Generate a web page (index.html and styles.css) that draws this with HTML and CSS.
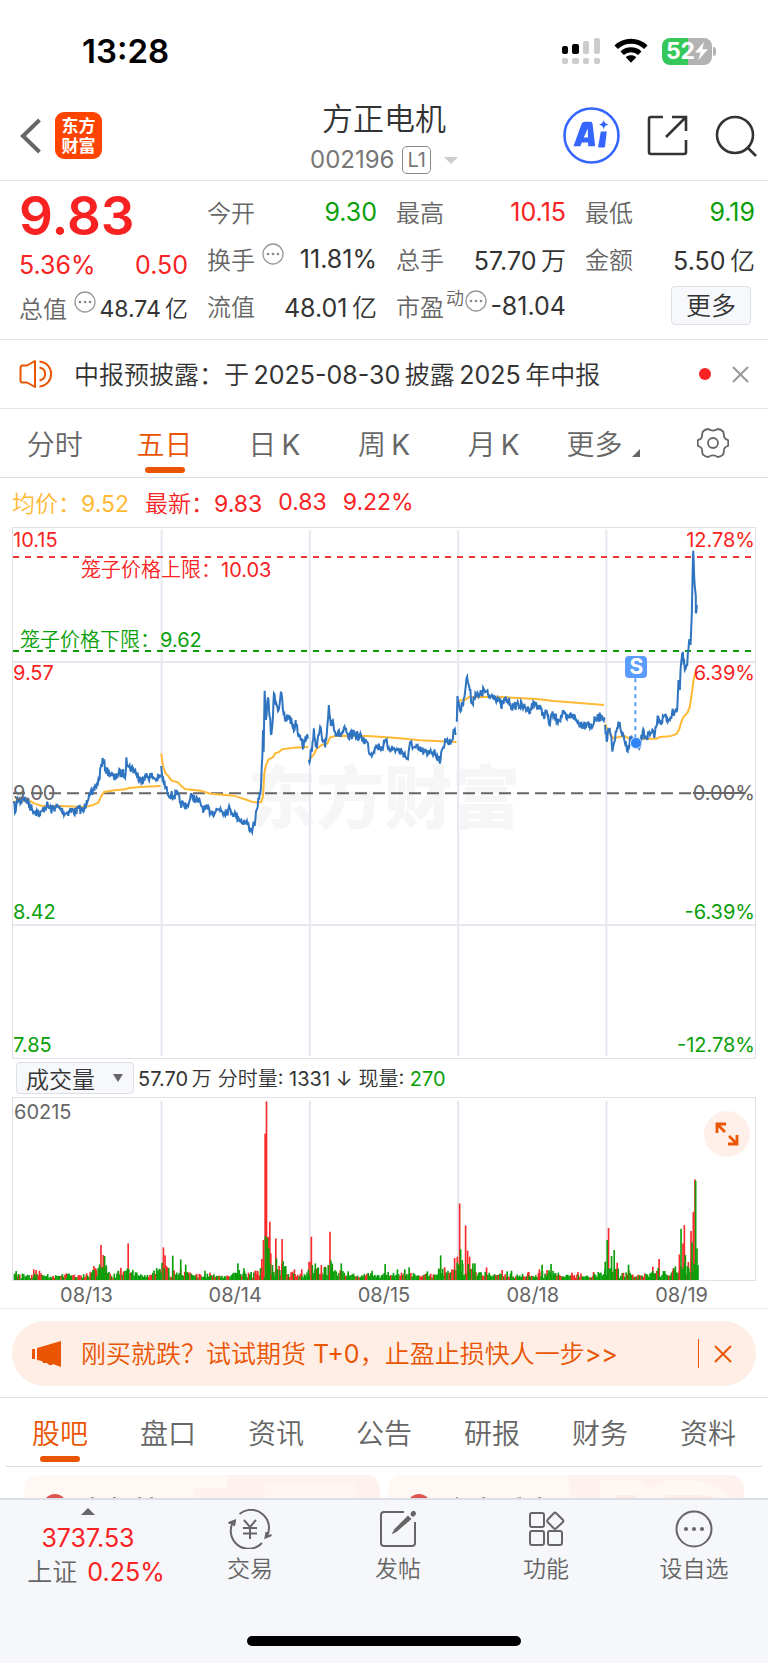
FILE: index.html
```html
<!DOCTYPE html>
<html lang="zh-CN">
<head>
    <meta charset="UTF-8">
    <meta name="viewport" content="width=device-width, initial-scale=1.0">
    <title>方正电机 002196</title>
    <link rel="stylesheet" href="styles.css">
</head>
<body>
    <div class="status-bar">
        <span class="time">13:28</span>
        <div class="status-icons">
            <svg width="38" height="27" viewBox="0 0 38 27">
                <g fill="#000"><rect x="0" y="8" width="6" height="8" rx="2"/><rect x="10" y="6" width="7" height="10" rx="2"/></g>
                <g fill="#ccc"><rect x="21" y="3" width="6" height="13" rx="2"/><rect x="32" y="0" width="6" height="16" rx="2"/><rect x="0" y="20" width="6" height="6" rx="2"/><rect x="10" y="20" width="7" height="6" rx="2"/><rect x="21" y="20" width="6" height="6" rx="2"/><rect x="32" y="20" width="6" height="6" rx="2"/></g>
            </svg>
            <svg width="34" height="26" viewBox="0 0 34 26" fill="none" stroke="#000" stroke-width="5">
                <path d="M2.2 9.2C10.5 1.2 23.5 1.2 31.8 9.2"/>
                <path d="M8.2 15.3C13 10.7 21 10.7 25.8 15.3"/>
                <path d="M11.8 19.2C14.5 16.7 19.5 16.7 22.2 19.2L17 24.8Z" fill="#000" stroke="none"/>
            </svg>
            <div class="battery">
                <span>52</span>
                <svg width="13" height="18" viewBox="0 0 13 18"><path d="M9 0L0 10.5H5.5L3.5 18L13 7.3H7.3Z" fill="#fff"/></svg>
            </div>
        </div>
    </div>

    <header class="header">
        <div class="header-left">
            <button class="icon-btn" aria-label="返回">
                <svg width="22" height="36" viewBox="0 0 22 36" fill="none" stroke="#666" stroke-width="4"><path d="M19.500 2L3 18L19.500 34"/></svg>
            </button>
            <a class="logo" href="#">东方<br>财富</a>
        </div>
        <div class="title">
            <h1>方正电机</h1>
            <div class="code">002196 <span class="level">L1</span><i class="caret"></i></div>
        </div>
        <div class="header-right">
            <button class="icon-btn" aria-label="AI">
                <svg width="57" height="57" viewBox="0 0 57 57">
                    <circle cx="28.500" cy="28.500" r="27" fill="none" stroke="#3567ff" stroke-width="2.600"/>
                    <path fill="#3567ff" fill-rule="evenodd" d="M18.500 17Q19.500 14.800 22 14.800H27.500Q29.200 14.800 29.600 17L32.200 39.300H25.300L25 35.600H18.800L17.400 39.300H10.500ZM24.700 21.500L20.800 30.500H25Z"/>
                    <path fill="#3567ff" d="M37.800 24.500H43.800L42 39.800Q41.800 40.500 41 40.500H36Q35 40.500 35.200 39.500ZM40.700 13Q41.500 16.800 45.500 17.600Q41.500 18.500 40.700 22.200Q39.800 18.500 36 17.600Q39.800 16.800 40.700 13Z"/>
                </svg>
            </button>
            <button class="icon-btn" aria-label="分享">
                <svg width="41" height="41" viewBox="0 0 41 41" fill="none" stroke="#333" stroke-width="2.600">
                    <path d="M16 2H4Q2 2 2 4V37Q2 39 4 39H37Q39 39 39 37V25"/>
                    <path d="M25 2H39V16M38.500 2.500L19 22"/>
                </svg>
            </button>
            <button class="icon-btn" aria-label="搜索">
                <svg width="42" height="42" viewBox="0 0 42 42" fill="none" stroke="#333" stroke-width="2.600"><circle cx="20" cy="20" r="18"/><path d="M32.500 32.500L41 41"/></svg>
            </button>
        </div>
    </header>

    <section class="quote">
        <div class="quote-main">
            <div class="price">9.83</div>
            <div class="row red"><span>5.36%</span><span>0.50</span></div>
            <div class="row"><span class="label">总值<svg class="more-dot" viewBox="0 0 22 22"><use href="#dots"/></svg></span><span class="small">48.74&thinsp;亿</span></div>
        </div>
        <div class="quote-grid">
            <div class="row"><span class="label">今开</span><span class="green">9.30</span></div>
            <div class="row"><span class="label">最高</span><span class="red">10.15</span></div>
            <div class="row"><span class="label">最低</span><span class="green">9.19</span></div>
            <div class="row"><span class="label">换手<svg class="more-dot" viewBox="0 0 22 22"><use href="#dots"/></svg></span><span>11.81%</span></div>
            <div class="row"><span class="label">总手</span><span>57.70&thinsp;万</span></div>
            <div class="row"><span class="label">金额</span><span>5.50&thinsp;亿</span></div>
            <div class="row"><span class="label">流值</span><span>48.01&thinsp;亿</span></div>
            <div class="row pe"><span class="label">市盈<sup>动</sup><svg class="more-dot" viewBox="0 0 22 22"><use href="#dots"/></svg></span><span>-81.04</span></div>
            <div class="row end"><button class="more-btn">更多</button></div>
        </div>
    </section>

    <section class="notice">
        <svg width="34" height="30" viewBox="0 0 34 30" fill="none" stroke="#ea5504" stroke-width="2">
            <path d="M16 2V28L8 23.500H3.500Q1.500 23.500 1.500 21V9Q1.500 6.500 3.500 6.500H8Z" stroke-linejoin="round"/>
            <path d="M20.500 2.500C36 4 36 26 20.500 27.500M20.500 8.500C28 10 28 20 20.500 21.500"/>
        </svg>
        <a href="#">中报预披露：于&thinsp;2025-08-30&thinsp;披露&thinsp;2025&thinsp;年中报</a>
        <i class="dot"></i>
        <button class="icon-btn" aria-label="关闭"><svg width="17" height="17" viewBox="0 0 17 17" stroke="#999" stroke-width="2"><path d="M1 1L16 16M16 1L1 16"/></svg></button>
    </section>

    <nav class="period-tabs">
        <button>分时</button>
        <button class="active">五日</button>
        <button>日&thinsp;K</button>
        <button>周&thinsp;K</button>
        <button>月&thinsp;K</button>
        <button>更多<i class="corner"></i></button>
        <button aria-label="设置">
            <svg width="32" height="32" viewBox="0 0 32 32" fill="none" stroke="#666" stroke-width="1.800" stroke-linejoin="round">
                <circle cx="16" cy="16" r="5"/>
                <path d="M31 13Q31.600 16 31 19Q27.500 20 27 22.400Q27 25 26.200 27.400Q24 29.800 20.700 30Q18.500 28.400 16 28.400Q13.500 28.400 11.300 30Q8 29.800 5.800 27.400Q5 25 5 22.400Q4.500 20 1 19Q.4 16 1 13Q4.500 12 5 9.600Q5 7 5.800 4.600Q8 2.200 11.300 2Q13.500 3.600 16 3.600Q18.500 3.600 20.700 2Q24 2.200 26.200 4.600Q27 7 27 9.600Q27.500 12 31 13Z"/>
            </svg>
        </button>
    </nav>

    <main>
        <div class="legend">
            <span class="yellow">均价：9.52</span>
            <span class="red">最新：9.83</span>
            <span class="red">0.83</span>
            <span class="red">9.22%</span>
        </div>

        <div class="chart">
            <span class="watermark">东方财富</span>
            <svg class="plot" viewBox="36 -396 2232 1590" preserveAspectRatio="none">
                <g class="grid">
                    <path d="M483 -390V1188M929 -390V1188M1375 -390V1188M1821 -390V1188M36 6H2268M36 795H2268"/>
                </g>
                <path class="limit-up" d="M36 -309H2258"/>
                <path class="limit-down" d="M36 -27H2258"/>
                <path class="zero" d="M36 400H2080"/>
                <g id="avgLines" class="avg"></g>
                <g id="priceLines" class="price-line"></g>
                <path class="sell-line" d="M1908 55V245"/>
            </svg>
            <i class="sell-dot"></i>
            <span class="sell-badge">S</span>
            <span class="axis red t1">10.15</span>
            <span class="axis red t2">9.57</span>
            <span class="axis gray t3">9.00</span>
            <span class="axis green t4">8.42</span>
            <span class="axis green t5">7.85</span>
            <span class="axis right red t1">12.78%</span>
            <span class="axis right red t2">6.39%</span>
            <span class="axis right gray t3 struck">0.00%</span>
            <span class="axis right green t4">-6.39%</span>
            <span class="axis right green t5">-12.78%</span>
            <span class="limit-label red up">笼子价格上限：10.03</span>
            <span class="limit-label green down">笼子价格下限：9.62</span>
        </div>

        <div class="volume-bar">
            <button class="select-btn">成交量<i class="caret"></i></button>
            <span>57.70&thinsp;万</span>
            <span>分时量: 1331 ↓</span>
            <span>现量: <b class="green">270</b></span>
        </div>

        <div class="volume">
            <svg class="plot" viewBox="36 171 2232 547" preserveAspectRatio="none">
                <g class="grid">
                    <path d="M483 180V718M929 180V718M1375 180V718M1821 180V718"/>
                </g>
                <g id="volumeBars"></g>
            </svg>
            <span class="axis gray">60215</span>
            <button class="expand" aria-label="全屏">
                <svg width="24" height="24" viewBox="0 0 24 24" fill="none" stroke="#ea5504" stroke-width="2.800"><path d="M2 11V2H11M2 2L10 10M13 22H22V13M22 22L14 14"/></svg>
            </button>
        </div>
        <div class="dates"><span>08/13</span><span>08/14</span><span>08/15</span><span>08/18</span><span>08/19</span></div>

        <div class="promo-wrap">
            <div class="promo">
                <svg width="32" height="26" viewBox="0 0 32 26" fill="#ea5504"><path d="M1 8H4V18H1ZM6 7L30 0V26L22 23Q19 26 16 22L12 22L11 20L6 19Z"/></svg>
                <a href="#">刚买就跌？试试期货 T+0，止盈止损快人一步&gt;&gt;</a>
                <i class="line"></i>
                <button class="icon-btn" aria-label="关闭"><svg width="18" height="18" viewBox="0 0 18 18" stroke="#ea5504" stroke-width="2"><path d="M1 1L17 17M17 1L1 17"/></svg></button>
            </div>
        </div>

        <nav class="info-tabs">
            <button class="active">股吧</button>
            <button>盘口</button>
            <button>资讯</button>
            <button>公告</button>
            <button>研报</button>
            <button>财务</button>
            <button>资料</button>
        </nav>

        <div class="cards">
            <a class="card" href="#" aria-label="股吧热帖">
                <svg viewBox="0 0 356 80" preserveAspectRatio="xMinYMin slice">
                    <path fill="#fff1ee" d="M203 0H356V80H170V13H203Z"/>
                    <path fill="#fff6f3" d="M241 8H331V80H241Z"/>
                    <circle cx="31" cy="31" r="12" fill="#dd554e"/>
                    <path fill="#999" d="M67 22H70V30H67ZM89 22H92V30H89ZM114 22H117V30H114ZM126 22H129V30H126Z"/>
                </svg>
            </a>
            <a class="card" href="#" aria-label="股吧话题">
                <svg viewBox="0 0 356 80" preserveAspectRatio="xMinYMin slice">
                    <path fill="#fff1ee" d="M181 0H356V80H185Z"/>
                    <path fill="#fff7f4" d="M212 5H250L260 14L276 6Q322 0 344 24V80H216Z"/>
                    <path fill="#feece8" d="M228 20H248V80H228ZM277 20H310Q326 20 336 26V80H277Z"/>
                    <circle cx="31" cy="31" r="12" fill="#dd554e"/>
                    <path fill="#999" d="M68 22H70V30H68ZM94 22H97V30H94ZM127 23L133 22V30H127ZM150 22H153V30H150Z"/>
                </svg>
            </a>
        </div>
    </main>

    <footer class="bottom-bar">
        <a class="index" href="#">
            <i class="caret-up"></i>
            <span class="red">3737.53</span>
            <span>上证 <b class="red">0.25%</b></span>
        </a>
        <a href="#">
            <svg width="44" height="40" viewBox="0 0 44 40" fill="none" stroke="#666" stroke-width="2">
                <path d="M11.500 5A18 18 0 0 1 38.500 28M34 34A18 18 0 0 1 6 11.500M0.500 14L7 11.500L6 17M43.500 26L37.500 28.500L38.500 23"/>
                <path d="M16 11L22 18L28 11M22 18V30M15 19H29M15 24.500H29"/>
            </svg>
            交易
        </a>
        <a href="#">
            <svg width="40" height="40" viewBox="0 0 40 40" fill="none" stroke="#666" stroke-width="2">
                <path d="M26 3H6Q3 3 3 6V34Q3 37 6 37H34Q37 37 37 34V13"/>
                <path d="M35 5L35.500 4.500" stroke-width="5" stroke-linecap="round"/>
                <path fill="#666" stroke="none" d="M30 6.500L33.500 10L19 22.500L13.500 25.500L16.500 20Z"/>
            </svg>
            发帖
        </a>
        <a href="#">
            <svg width="40" height="40" viewBox="0 0 40 40" fill="none" stroke="#666" stroke-width="2">
                <rect x="4" y="4" width="14" height="14" rx="2"/><rect x="4" y="22" width="14" height="14" rx="2"/><rect x="22" y="22" width="14" height="14" rx="2"/>
                <path d="M27.800 4.200Q29 3 30.200 4.200L36.800 10.800Q38 12 36.800 13.200L30.200 19.200Q29 20.400 27.800 19.200L21.700 13.200Q20.500 12 21.700 10.800Z"/>
            </svg>
            功能
        </a>
        <a href="#">
            <svg width="40" height="40" viewBox="0 0 40 40" fill="none" stroke="#666" stroke-width="2">
                <circle cx="20" cy="20" r="17.500"/>
                <g fill="#666" stroke="none"><circle cx="12" cy="20" r="2"/><circle cx="20" cy="20" r="2"/><circle cx="28" cy="20" r="2"/></g>
            </svg>
            设自选
        </a>
        <i class="home"></i>
    </footer>

    <svg class="defs" width="0" height="0">
        <symbol id="dots" viewBox="0 0 22 22">
            <circle cx="11" cy="11" r="10" fill="none" stroke="#999" stroke-width="1.300"/>
            <g fill="#888"><circle cx="6" cy="11" r="1.300"/><circle cx="11" cy="11" r="1.300"/><circle cx="16" cy="11" r="1.300"/></g>
        </symbol>
    </svg>
    <script src="script.js"></script>
</body>
</html>
```
FILE: styles.css
```css
* {
    box-sizing: border-box;
}
body {
    margin: 0;
    height: 100vh;
    display: flex;
    flex-direction: column;
    overflow: hidden;
    background: #fff;
    color: #333;
    font-family: Inter, "Noto Sans CJK SC DemiLight", "Noto Sans CJK SC", sans-serif;
    font-size: 25px;
    font-weight: 400;
}
button {
    font: inherit;
    color: inherit;
    background: none;
    border: none;
    padding: 0;
    cursor: pointer;
}
a {
    color: inherit;
    text-decoration: none;
}
svg {
    display: block;
}
b {
    font-weight: inherit;
}
.red { color: #f82222; }
.green { color: #0a9f0a; }
.yellow { color: #ffb935; }
.gray { color: #666; }
.defs {
    position: absolute;
}
.status-bar {
    flex: none;
    height: 93px;
    padding: 9px 56px 0 82px;
    display: flex;
    align-items: center;
    justify-content: space-between;
}
.time {
    color: #000;
    font-size: 33px;
    font-weight: 600;
}
.status-icons {
    display: flex;
    align-items: center;
    gap: 14px;
}
.battery {
    width: 50px;
    height: 27px;
    border-radius: 8px;
    background: linear-gradient(90deg, #34c759 52%, #b3b3b3 52%);
    color: #fff;
    font-size: 23px;
    font-weight: 700;
    display: flex;
    align-items: center;
    justify-content: center;
}
.battery::after {
    content: "";
    width: 3px;
    height: 9px;
    margin-right: -8px;
    margin-left: 5px;
    border-radius: 0 3px 3px 0;
    background: #b3b3b3;
}
.header {
    flex: none;
    height: 88px;
    padding: 0 11px;
    display: grid;
    grid-template-columns: 1fr auto 1fr;
    align-items: center;
    border-bottom: 1px solid #e3e3e3;
}
.header-left, .header-right {
    padding-bottom: 2px;
    display: flex;
    align-items: center;
}
.header-left {
    padding-left: 9px;
    gap: 13px;
}
.header-right {
    justify-content: flex-end;
    gap: 27px;
}
.logo {
    width: 47px;
    height: 47px;
    padding-top: 3px;
    border-radius: 9px;
    background: #ff4400;
    color: #fff;
    font-family: "Noto Sans CJK SC", sans-serif;
    font-size: 17px;
    font-weight: 700;
    line-height: 20px;
    text-align: center;
}
.title {
    padding-top: 1px;
    text-align: center;
}
.title h1 {
    margin: 0;
    font-size: 31px;
    font-weight: 400;
    line-height: 46px;
}
.code {
    display: flex;
    align-items: center;
    color: #777;
    font-size: 24px;
    line-height: 36px;
}
.level {
    height: 28px;
    margin-left: 8px;
    padding: 0 4px;
    border: 1px solid #888;
    border-radius: 5px;
    font-size: 20px;
    line-height: 27px;
}
.caret {
    border: 7px solid transparent;
    border-top-color: #ccc;
    border-bottom: none;
}
.code .caret {
    margin-left: 13px;
}
.quote {
    flex: none;
    height: 159px;
    padding: 7px 13px 0 19px;
    display: grid;
    grid-template-columns: 169px 1fr;
    gap: 19px;
    border-bottom: 1px solid #e3e3e3;
}
.price {
    height: 56px;
    color: #f82222;
    font-size: 53px;
    font-weight: 600;
    line-height: 56px;
}
.quote-grid {
    display: grid;
    grid-template-columns: repeat(3, 1fr);
    grid-auto-rows: 47px;
    column-gap: 19px;
}
.row {
    height: 47px;
    display: flex;
    align-items: center;
    justify-content: space-between;
    white-space: nowrap;
}
.quote-main .row {
    height: 42px;
}
.label {
    color: #666;
    font-size: 24px;
    display: flex;
    align-items: center;
}
.small {
    font-size: 23px;
}
.more-dot {
    width: 22px;
    height: 22px;
    margin: 0 0 10px 7px;
}
.pe .more-dot {
    margin-left: 1px;
}
.pe sup {
    font-size: 18px;
    line-height: 18px;
    margin: 0 0 14px 2px;
}
.end {
    justify-content: flex-end;
}
.more-btn {
    width: 80px;
    height: 39px;
    margin-right: 4px;
    border: 1px solid #dcdfe6;
    border-radius: 4px;
    background: #f6f8fb;
    line-height: 36px;
}
.notice {
    flex: none;
    height: 69px;
    padding: 0 19px;
    display: flex;
    align-items: center;
    border-bottom: 1px solid #e6e6e8;
}
.notice a {
    flex: 1;
    padding: 0 0 3px 21px;
}
.dot {
    width: 12px;
    height: 12px;
    margin-right: 21px;
    border-radius: 50%;
    background: #f82222;
}
.period-tabs, .info-tabs {
    flex: none;
    height: 69px;
    display: flex;
    align-items: center;
    border-bottom: 1px solid #dcdde2;
    color: #666;
    font-size: 28px;
}
.period-tabs button, .info-tabs button {
    flex: 1;
    height: 100%;
    position: relative;
    display: flex;
    align-items: center;
    justify-content: center;
}
.period-tabs .active, .info-tabs .active {
    color: #ea5504;
}
.active::after {
    content: "";
    position: absolute;
    bottom: 4px;
    left: 50%;
    margin-left: -20px;
    width: 40px;
    height: 6px;
    border-radius: 3px;
    background: #ea5504;
}
.corner {
    margin: 20px 0 0 10px;
    border-left: 8px solid transparent;
    border-bottom: 8px solid #666;
}
main {
    flex: 1;
    min-height: 0;
    overflow: hidden;
}
.legend {
    height: 49px;
    padding: 0 12px 1px;
    display: flex;
    align-items: center;
    gap: 16px;
    font-size: 23px;
}
.chart, .volume {
    position: relative;
    margin: 0 12px;
    border: 1px solid #dfe1e8;
}
.chart {
    height: 532px;
}
.volume {
    height: 184px;
}
.plot {
    position: relative;
    width: 100%;
    height: 100%;
}
.plot path {
    fill: none;
    vector-effect: non-scaling-stroke;
}
.grid path {
    stroke: #e6e8f0;
    stroke-width: 2;
}
.limit-up, .limit-down {
    stroke: #ee3a3a;
    stroke-width: 2;
    stroke-dasharray: 6 6;
}
.limit-down {
    stroke: #0a9f0a;
}
.zero {
    stroke: #666;
    stroke-width: 2;
    stroke-dasharray: 12 6;
}
.avg path {
    stroke: #ffb935;
    stroke-width: 2;
}
.price-line path {
    stroke: #2f74c0;
    stroke-width: 2;
}
.sell-line {
    stroke: #5a9cf8;
    stroke-width: 2;
    stroke-dasharray: 4 4;
}
.watermark {
    position: absolute;
    top: 216px;
    left: 0;
    right: 0;
    text-align: center;
    color: #f6f6f6;
    font-family: "Noto Sans CJK SC", sans-serif;
    font-size: 68px;
    font-weight: 900;
    line-height: 100px;
}
.sell-dot, .sell-badge {
    position: absolute;
    left: 84%;
    transform: translateX(-50%);
}
.sell-dot {
    top: 210px;
    width: 10px;
    height: 10px;
    border-radius: 50%;
    background: #2d84f8;
    box-shadow: 0 0 0 1px #bcd9ff;
}
.sell-badge {
    top: 128px;
    width: 22px;
    height: 22px;
    border-radius: 4px;
    background: #5a9cff;
    color: #fff;
    font-size: 21px;
    font-weight: 700;
    line-height: 22px;
    text-align: center;
}
.axis {
    position: absolute;
    left: 0;
    font-size: 20px;
    line-height: 24px;
}
.right {
    left: auto;
    right: 0;
}
.t1 { top: 0; }
.t2 { top: 133px; }
.t3 { top: 253px; }
.t4 { top: 372px; }
.t5 { top: 505px; }
.struck {
    background: linear-gradient(#666, #666) 0 11px / 85% 2px no-repeat;
}
.limit-label {
    position: absolute;
    font-size: 20px;
    line-height: 28px;
}
.up {
    top: 28px;
    left: 68px;
}
.down {
    top: 98px;
    left: 7px;
}
.volume-bar {
    height: 38px;
    padding: 0 16px 1px;
    display: flex;
    align-items: center;
    gap: 6px;
    font-size: 20px;
}
.select-btn {
    width: 118px;
    height: 32px;
    padding: 0 10px 0 9px;
    margin-right: -2px;
    display: flex;
    align-items: center;
    justify-content: space-between;
    border: 1px solid #dcdfe6;
    border-radius: 4px;
    background: #f6f8fb;
    font-size: 23px;
}
.select-btn .caret {
    border-width: 8px 5px 0;
    border-top-color: #666;
}
.volume .axis {
    top: 2px;
    left: 1px;
}
.expand {
    position: absolute;
    top: 13px;
    right: 5px;
    width: 46px;
    height: 46px;
    border-radius: 50%;
    background: #fef0e9;
    display: flex;
    align-items: center;
    justify-content: center;
}
.dates {
    height: 28px;
    padding: 0 12px;
    display: flex;
    border-bottom: 1px solid #ececec;
    color: #666;
    font-size: 20px;
    line-height: 29px;
}
.dates span {
    flex: 1;
    text-align: center;
}
.promo-wrap {
    padding: 12px 12px 11px;
    border-bottom: 1px solid #e3e3e3;
}
.promo {
    height: 65px;
    padding: 0 24px 0 19px;
    display: flex;
    align-items: center;
    border-radius: 33px;
    background: #feeee5;
    color: #ea5504;
}
.promo a {
    flex: 1;
    padding: 0 0 3px 18px;
}
.line {
    width: 1px;
    height: 29px;
    margin-right: 15px;
    background: #ea5504;
}
.info-tabs {
    margin: 0 6px;
}
.cards {
    padding: 8px 24px 0;
    display: grid;
    grid-template-columns: 1fr 1fr;
    gap: 8px;
}
.card {
    height: 80px;
    border-radius: 14px;
    overflow: hidden;
    background: #fff8f5;
}
.card svg {
    width: 100%;
    height: 80px;
}
.bottom-bar {
    flex: none;
    position: relative;
    height: 165px;
    padding-top: 9px;
    display: flex;
    align-items: flex-start;
    border-top: 2px solid #dcdfe6;
    background: #f6f7fa;
    color: #666;
    font-size: 23px;
}
.bottom-bar a {
    flex: 1;
    display: flex;
    flex-direction: column;
    align-items: center;
    line-height: 40px;
}
.bottom-bar .index {
    flex: 0 0 176px;
    font-size: 25px;
    line-height: 34px;
}
.caret-up {
    margin: -1px 0 6px;
    border: 7px solid transparent;
    border-bottom-color: #666;
    border-top: none;
}
.index span:last-child {
    padding-left: 16px;
}
.index b {
    padding-left: 3px;
}
.home {
    position: absolute;
    left: 50%;
    bottom: 17px;
    width: 274px;
    height: 10px;
    margin-left: -137px;
    border-radius: 5px;
    background: #000;
}
```
FILE: script.js
```js
// each day: x offset of its points, then [x, y] pairs in plot units
const priceDays = [
    [0, [38,430, 44,455, 50,415, 60,425, 65,410, 80,425, 95,450, 110,455, 117,468, 125,450, 137,435, 150,450, 165,440, 180,448, 195,460, 210,450, 225,455, 235,445, 248,455, 258,420, 265,400, 275,405, 285,378, 295,360, 300,320, 307,300, 318,335, 330,340, 342,358, 350,340, 375,340, 377,292, 383,320, 400,330, 412,345, 415,365, 430,350, 455,348, 465,358, 480,352]],
    [0, [482,318, 484,345, 490,370, 500,395, 515,408, 530,405, 540,430, 550,437, 565,430, 575,405, 585,420, 600,430, 610,448, 640,455, 660,445, 670,455, 690,448, 700,460, 715,475, 730,485, 745,495, 750,510, 757,505, 765,480, 772,440, 778,400, 782,380, 786,290, 788,210, 790,275, 793,92, 797,180, 803,112, 808,170, 813,225, 818,170, 821,100, 828,130, 835,150, 842,95, 848,150, 856,185, 865,165, 875,190, 883,210, 886,180, 892,215, 905,235, 908,265, 912,238, 923,236]],
    [0, [926,300, 935,275, 941,205, 945,240, 950,265, 960,200, 966,240, 975,262, 980,220, 986,135, 992,195, 998,180, 1005,215, 1020,225, 1035,210, 1045,235, 1060,220, 1085,235, 1100,245, 1112,285, 1125,260, 1150,260, 1154,245, 1172,265, 1192,270, 1207,275, 1224,298, 1232,245, 1242,262, 1257,270, 1272,275, 1282,285, 1292,270, 1312,285, 1322,300, 1330,262, 1336,235, 1344,250, 1357,240, 1361,210, 1367,225]],
    [1152, [219,185, 221,108, 230,155, 240,115, 250,50, 258,90, 264,130, 275,100, 285,110, 302,90, 315,110, 330,105, 345,120, 352,140, 365,118, 380,130, 390,145, 400,130, 420,142, 435,150, 455,128, 470,148, 480,165, 490,155, 497,195, 505,165, 525,180, 540,162, 550,178, 567,162, 580,185, 600,195, 615,185, 620,205, 635,180, 655,168, 663,172]],
    [1152, [665,195, 670,245, 675,205, 682,225, 687,275, 695,240, 705,185, 715,220, 725,250, 733,275, 740,235, 752,240, 760,265, 770,260, 778,215, 785,230, 800,225, 815,220, 825,170, 835,185, 845,165, 850,180, 862,170, 878,145, 882,150, 886,60, 890,90, 892,30, 897,-20, 905,30, 912,15, 918,-60, 922,-45, 926,-140, 930,-328, 933,-250, 938,-190, 938,-140, 941,-165]]
];

const avgDays = [
    [0, [38,425, 60,424, 85,422, 100,430, 120,437, 180,438, 250,441, 275,436, 292,428, 302,408, 310,396, 340,391, 375,388, 383,384, 430,380, 480,378]],
    [0, [482,280, 487,318, 495,340, 503,348, 512,361, 532,367, 540,376, 553,387, 600,392, 630,401, 700,407, 740,420, 760,427, 782,427, 788,410, 792,340, 797,315, 805,298, 818,292, 825,280, 837,276, 845,268, 880,263, 924,261]],
    [0, [926,300, 940,285, 950,266, 965,255, 982,250, 990,232, 1010,227, 1100,228, 1150,231, 1200,235, 1260,241, 1320,244, 1370,246]],
    [1152, [220,130, 230,120, 240,122, 255,112, 300,111, 340,110, 400,114, 460,117, 510,123, 580,128, 662,135]],
    [1152, [665,192, 675,215, 690,235, 710,230, 725,229, 738,236, 820,236, 830,231, 860,229, 880,222, 888,208, 893,190, 900,172, 913,158, 920,140, 926,100, 932,55, 938,35]]
];

// [x, height, color] of the tall bars
const spikes = [
    [45,27,'g'], [52,18,'g'], [98,32,'r'], [105,30,'r'], [115,28,'r'], [196,20,'r'], [204,18,'g'], [257,20,'r'], [279,42,'r'], [286,30,'r'], [293,28,'r'], [300,105,'r'], [307,75,'r'], [311,72,'g'], [316,44,'g'], [353,26,'r'], [382,110,'r'], [468,36,'g'], [478,32,'r'],
    [488,98,'r'], [493,74,'r'], [491,36,'g'], [516,73,'g'], [540,62,'g'], [555,46,'g'], [563,22,'r'], [613,28,'g'], [628,22,'r'], [712,50,'g'], [730,35,'g'], [752,24,'g'], [770,28,'r'], [784,63,'r'], [789,120,'r'], [794,440,'r'], [798,537,'r'], [803,130,'r'], [808,175,'r'], [795,132,'g'], [800,125,'g'], [805,95,'g'], [811,80,'r'], [816,45,'g'], [826,125,'r'], [828,65,'g'], [838,30,'g'], [845,123,'r'], [848,30,'g'], [882,32,'r'], [904,32,'r'], [926,55,'r'],
    [933,130,'r'], [945,50,'g'], [954,38,'g'], [963,45,'r'], [975,40,'r'], [989,145,'r'], [992,58,'g'], [1023,50,'g'], [1044,26,'g'], [1116,28,'g'], [1155,48,'g'], [1192,32,'g'], [1214,32,'g'], [1227,38,'g'], [1282,26,'g'], [1322,74,'g'], [1334,38,'r'], [1364,66,'r'], [1372,70,'r'],
    [1379,230,'r'], [1382,92,'g'], [1387,60,'g'], [1397,164,'r'], [1403,88,'r'], [1409,70,'r'], [1405,48,'g'], [1419,50,'g'], [1425,50,'g'], [1460,38,'r'], [1507,30,'r'], [1522,26,'g'], [1535,28,'g'], [1587,24,'r'], [1619,32,'r'], [1627,46,'g'], [1642,30,'r'], [1654,48,'g'], [1717,22,'r'], [1735,24,'r'], [1782,24,'r'], [1817,55,'g'],
    [1823,120,'g'], [1827,156,'r'], [1836,72,'g'], [1844,90,'g'], [1853,52,'r'], [1887,46,'g'], [1960,40,'r'], [1979,63,'r'], [2022,36,'r'], [2040,77,'r'], [2045,154,'g'], [2051,110,'r'], [2055,165,'r'], [2058,75,'g'], [2067,54,'r'], [2075,147,'r'], [2082,205,'r'], [2078,113,'g'], [2087,302,'r'], [2089,298,'g'], [2093,95,'g'], [2096,45,'g']
];

let seed = 7;
function random() {
    seed = (seed * 16807) % 2147483647;
    return seed / 2147483647;
}

function drawLine(parent, offset, pts, jitter) {
    let d = 'M' + (pts[0] + offset) + ' ' + pts[1];
    for (let i = 2; i < pts.length; i += 2) {
        const x0 = pts[i - 2], y0 = pts[i - 1], x1 = pts[i], y1 = pts[i + 1];
        const steps = jitter ? Math.max(1, Math.round((x1 - x0) / 2)) : 1;
        for (let s = 1; s <= steps; s++) {
            const noise = s < steps ? (random() - 0.5) * jitter : 0;
            d += 'L' + (x0 + (x1 - x0) * s / steps + offset).toFixed(1) + ' ' + (y0 + (y1 - y0) * s / steps + noise).toFixed(1);
        }
    }
    const path = document.createElementNS('http://www.w3.org/2000/svg', 'path');
    path.setAttribute('d', d);
    parent.appendChild(path);
}

function drawBar(x, h, color) {
    const bar = document.createElementNS('http://www.w3.org/2000/svg', 'rect');
    bar.setAttribute('x', x - 2);
    bar.setAttribute('y', 718 - h);
    bar.setAttribute('width', 5);
    bar.setAttribute('height', h);
    bar.setAttribute('fill', color === 'r' ? '#f82a2a' : '#0a9f0a');
    document.getElementById('volumeBars').appendChild(bar);
}

avgDays.forEach(([offset, pts]) => drawLine(document.getElementById('avgLines'), offset, pts, 0));
priceDays.forEach(([offset, pts]) => drawLine(document.getElementById('priceLines'), offset, pts, 28));

spikes.filter(s => s[2] === 'r').forEach(s => drawBar(...s));
for (let x = 40; x < 2096; x += 4) {
    // small bars are taller close to a spike
    let near = 0;
    spikes.forEach(s => {
        const dist = Math.abs(s[0] - x);
        if (dist < 50) near = Math.max(near, Math.min(s[1], 110) * (1 - dist / 50));
    });
    drawBar(x, 5 + random() * 8 + near * random() * 0.45, random() < 0.3 ? 'r' : 'g');
}
spikes.filter(s => s[2] === 'g').forEach(s => drawBar(...s));
```
